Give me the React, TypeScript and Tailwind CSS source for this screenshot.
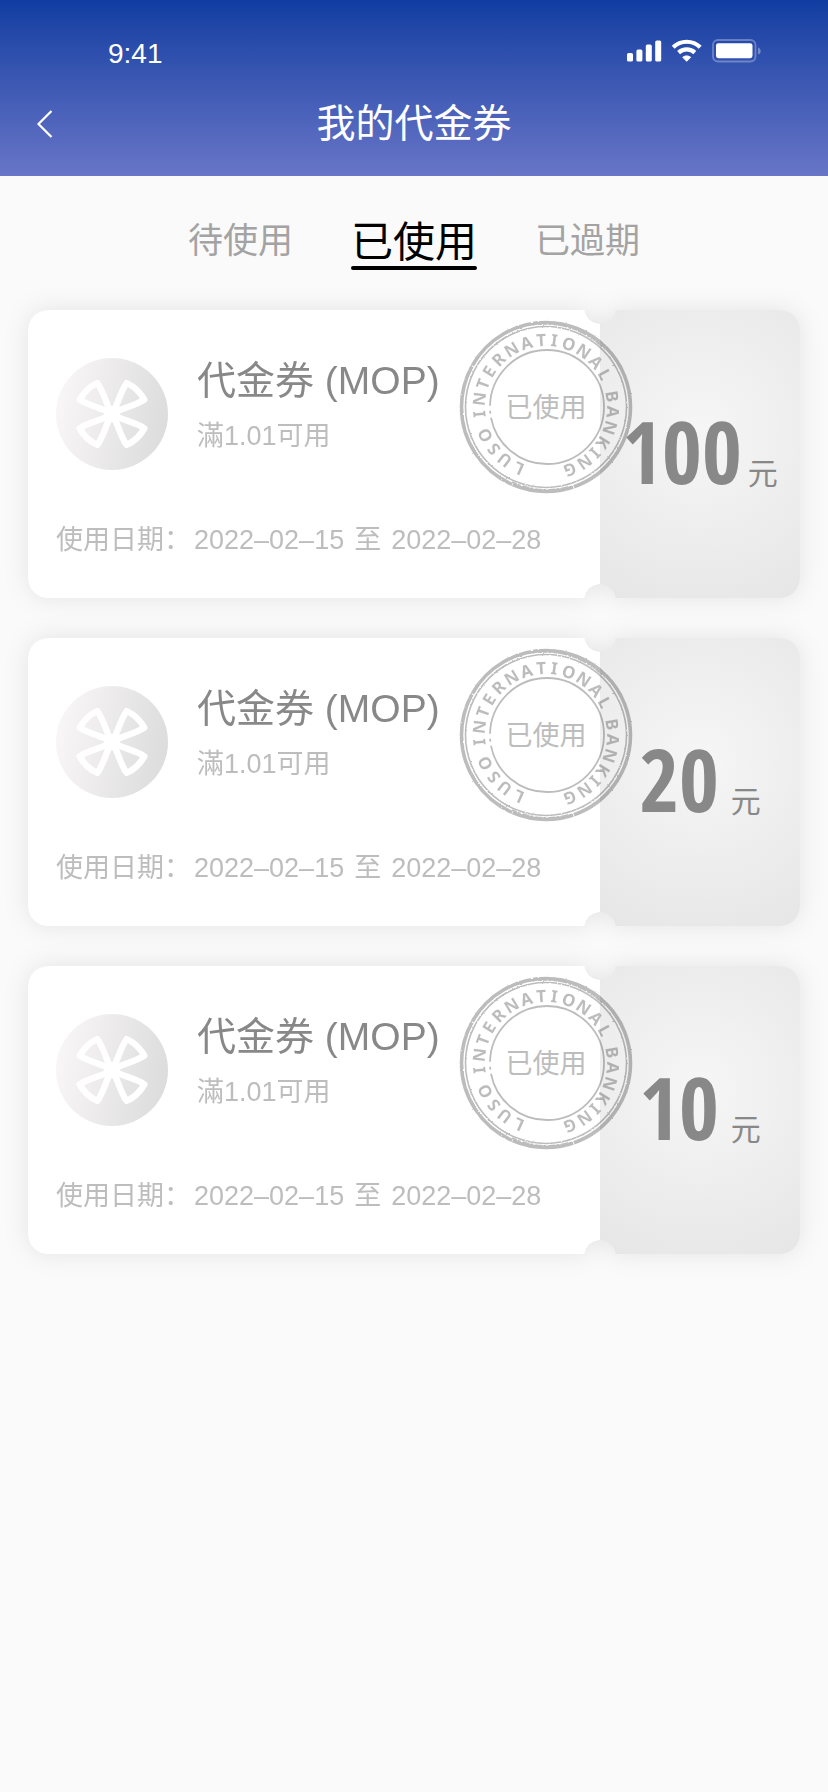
import React from "react";

type Coupon = { id: number; title: string; condition: string; from: string; to: string; amount: string };

const coupons: Coupon[] = [
  { id: 1, title: "代金券 (MOP)", condition: "滿1.01可用", from: "2022–02–15", to: "2022–02–28", amount: "100" },
  { id: 2, title: "代金券 (MOP)", condition: "滿1.01可用", from: "2022–02–15", to: "2022–02–28", amount: "20" },
  { id: 3, title: "代金券 (MOP)", condition: "滿1.01可用", from: "2022–02–15", to: "2022–02–28", amount: "10" },
];

const stampLetters: [string, number][] = [
  ["L", 204], ["U", 218], ["S", 231], ["O", 245],
  ["I", 264], ["N", 277], ["T", 290], ["E", 302], ["R", 315], ["N", 329], ["A", 343],
  ["T", 356], ["I", 7], ["O", 20], ["N", 34], ["A", 48], ["L", 61],
  ["B", 81], ["A", 94], ["N", 108], ["K", 122], ["I", 133], ["N", 145], ["G", 159],
];

function StatusIcons() {
  return (
    <svg viewBox="0 0 134 24" className="h-6 w-[134px]" aria-hidden="true">
      <g fill="#fff">
        <rect x="0" y="14" width="6" height="8.5" rx="1.6" />
        <rect x="9.4" y="10.5" width="6" height="12" rx="1.6" />
        <rect x="18.8" y="5.5" width="6" height="17" rx="1.6" />
        <rect x="28.2" y="1.5" width="6" height="21" rx="1.6" />
      </g>
      <g fill="none" stroke="#fff" strokeWidth="4.2">
        <path d="M46.2 8.2C53.6 .9 65.8 .9 73.2 8.2" />
        <path d="M51.6 13.6C56.1 9.4 63.3 9.4 67.8 13.6" />
      </g>
      <path d="M59.7 22.8L55.2 18.2C57.6 15.9 61.8 15.9 64.2 18.2Z" fill="#fff" />
      <rect x="86" y="1" width="42.5" height="21.5" rx="5" fill="none" stroke="#fff" strokeOpacity=".3" strokeWidth="1.8" />
      <rect x="89" y="4.2" width="36.5" height="15" rx="2.4" fill="#fff" />
      <path d="M131 8.4C134.6 9.4 134.6 14.6 131 15.6Z" fill="#fff" fillOpacity=".35" />
    </svg>
  );
}

function CloverLogo() {
  const petal = "M0 0C-15 -20 -23 -64 -44 -93Q-78 -77 -97 -43C-69 -24 -24 -17 0 0Z";
  return (
    <svg viewBox="-168 -168 336 336" className="size-28 shrink-0" aria-hidden="true">
      <defs>
        <linearGradient id="logo-fill" x1="0" y1=".4" x2="1" y2=".6">
          <stop offset="0" stopColor="#f9f6f7" />
          <stop offset="1" stopColor="#dcdcdc" />
        </linearGradient>
      </defs>
      <circle r="168" fill="url(#logo-fill)" />
      <g fill="none" stroke="#fff" strokeWidth="19" strokeLinejoin="round">
        <path d={petal} />
        <path d={petal} transform="scale(-1 1)" />
        <path d={petal} transform="scale(1 -1)" />
        <path d={petal} transform="scale(-1 -1)" />
      </g>
      <circle r="24" fill="#fff" />
    </svg>
  );
}

function Stamp() {
  return (
    <svg viewBox="-88 -88 176 176" className="size-44" role="img" aria-label="已使用">
      <defs>
        <filter id="rough" x="-5%" y="-5%" width="110%" height="110%">
          <feTurbulence type="fractalNoise" baseFrequency=".35" numOctaves="2" seed="4" result="n" />
          <feDisplacementMap in="SourceGraphic" in2="n" scale="2" xChannelSelector="R" yChannelSelector="G" />
        </filter>
      </defs>
      <g opacity=".26">
        <g fill="none" stroke="#000" filter="url(#rough)">
          <circle r="84.5" strokeWidth="3.6" strokeDasharray="104 .8 62 .6 140 1 240 .6" />
          <circle r="80.5" strokeWidth="1.6" />
          <path d="M-14 -82.5A83.5 83.5 0 0 1 58 -59" strokeWidth="2.5" strokeDasharray="5 1 9 1.5 3 1" />
          <path d="M22 80A83 83 0 0 1 -34 75" strokeWidth="1.5" strokeDasharray="7 2 3 1" />
        </g>
        <circle cx="1" cy="0" r="57" fill="none" stroke="#000" strokeWidth="1.8" strokeDasharray="168 4 3 5 400" />
        <g className="font-['Noto_Sans','Open_Sans',sans-serif] text-[17px] font-bold" fill="#000" textAnchor="middle">
          {stampLetters.map(([letter, angle]) => (
            <text key={angle} y="-61" transform={`rotate(${angle})`}>{letter}</text>
          ))}
        </g>
      </g>
      <text x="0" y="10" textAnchor="middle" fill="#bdbdbd" className="text-[27px]">已使用</text>
    </svg>
  );
}

function CouponCard({ coupon }: { coupon: Coupon }) {
  return (
    <li className="relative">
      <div className="drop-shadow-[0_0_12px_rgba(0,0,0,0.09)]">
        <div className="flex h-72 overflow-hidden rounded-[20px] [mask-composite:intersect] [mask-image:radial-gradient(circle_16px_at_calc(100%_-_200px)_-2px,transparent_15.5px,black_16px),radial-gradient(circle_16px_at_calc(100%_-_200px)_calc(100%_+_2px),transparent_15.5px,black_16px)]">
          <div className="flex min-w-0 flex-1 flex-col justify-between bg-white pt-12 pr-4 pb-[38px] pl-7">
            <div className="flex gap-[29px]">
              <CloverLogo />
              <div className="flex flex-col">
                <h2 className="text-[39px] leading-[46px] text-[#888]">{coupon.title}</h2>
                <p className="mt-3 text-[27px] leading-10 text-[#bdbdbd]">{coupon.condition}</p>
              </div>
            </div>
            <p className="flex gap-[10px] text-[27px] leading-10 whitespace-nowrap text-[#bdbdbd]">
              <span className="flex gap-[3px]">
                <span>使用日期：</span>
                <time>{coupon.from}</time>
              </span>
              <span>至</span>
              <time>{coupon.to}</time>
            </p>
          </div>
          <div className="w-[200px] shrink-0 bg-[radial-gradient(circle_at_50%_42%,#f6f6f6,#e6e6e6)]" />
        </div>
      </div>
      <div className="absolute top-[9px] right-[166px]">
        <Stamp />
      </div>
      <p className={`absolute top-[93px] right-0 flex h-24 w-[200px] items-baseline justify-center text-[#888] ${coupon.amount.length > 2 ? "gap-[6px]" : "gap-3"}`}>
        <span className="font-['Open_Sans_Condensed','Open_Sans',sans-serif] text-[86px] leading-24 font-bold">{coupon.amount}</span>
        <span className="text-[30px]">元</span>
      </p>
    </li>
  );
}

export default function App() {
  return (
    <div className="min-h-screen bg-[#fafafa] font-['Liberation_Sans','Noto_Sans_CJK_SC',sans-serif]">
      <header className="bg-linear-to-b from-[#103da1] to-[#6875c7] text-white">
        <div className="flex h-20 items-end justify-between pr-[67px] pl-[108px]">
          <time className="pb-2 text-[28px] leading-9">9:41</time>
          <span className="pb-[17px]"><StatusIcons /></span>
        </div>
        <div className="grid h-24 grid-cols-[96px_1fr_96px] items-center pb-2">
          <button type="button" aria-label="返回" className="flex h-12 items-center pl-9">
            <svg viewBox="0 0 18 28" className="h-7 w-[18px]" fill="none" stroke="#fff" strokeWidth="2.2" aria-hidden="true">
              <path d="M15.5 1L2.5 14L15.5 27" />
            </svg>
          </button>
          <h1 className="text-center text-[39px] leading-12">我的代金券</h1>
        </div>
      </header>
      <main className="px-7">
        <div role="tablist" className="flex items-center justify-center gap-[58px] pt-9 pb-10">
          <button type="button" role="tab" aria-selected="false" className="text-[35px] leading-14 text-[#a3a3a3]">待使用</button>
          <button type="button" role="tab" aria-selected="true" className="flex flex-col pt-2 text-[42px] leading-[46px] text-black">
            已使用
            <span className="h-1 w-full rounded-full bg-black" />
          </button>
          <button type="button" role="tab" aria-selected="false" className="text-[35px] leading-14 text-[#a3a3a3]">已過期</button>
        </div>
        <ul className="flex flex-col gap-10">
          {coupons.map((c) => <CouponCard key={c.id} coupon={c} />)}
        </ul>
      </main>
    </div>
  );
}
